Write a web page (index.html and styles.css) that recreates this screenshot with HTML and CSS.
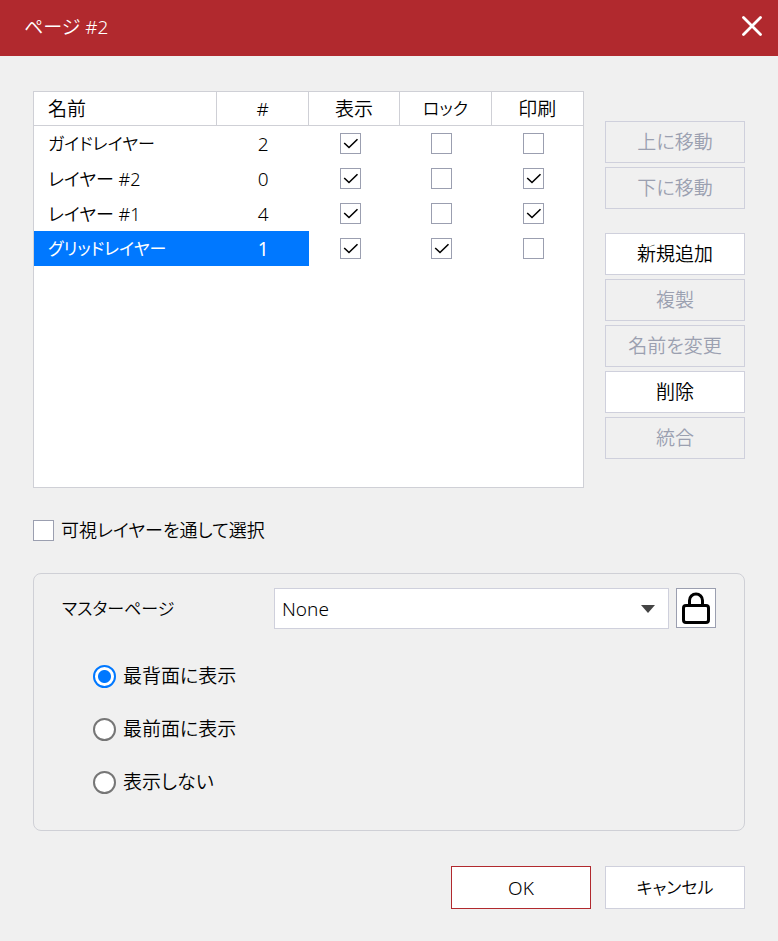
FILE: index.html
```html
<!DOCTYPE html>
<html lang="ja">
<head>
<meta charset="utf-8">
<title>ページ #2</title>
<link rel="stylesheet" href="styles.css">
</head>
<body>
<header class="titlebar">
  <h1 class="title">ページ #2</h1>
  <button class="close" type="button" aria-label="閉じる">
    <svg width="22" height="22" viewBox="0 0 22 22"><path d="M2.500 1.500 19.500 18.500M19.500 1.500 2.500 18.500" fill="none" stroke="#fff" stroke-width="2.800" stroke-linecap="round"/></svg>
  </button>
</header>
<form class="dialog">
  <div class="layers">
    <div class="list">
      <table class="table">
        <thead>
          <tr><th class="name">名前</th><th>#</th><th>表示</th><th class="kana">ロック</th><th>印刷</th></tr>
        </thead>
        <tbody>
          <tr>
            <td class="name kana">ガイドレイヤー</td><td>2</td>
            <td class="tick"><input class="check" type="checkbox" aria-label="表示" checked></td>
            <td class="tick"><input class="check" type="checkbox" aria-label="ロック"></td>
            <td class="tick"><input class="check" type="checkbox" aria-label="印刷"></td>
          </tr>
          <tr>
            <td class="name mixed">レイヤー #2</td><td>0</td>
            <td class="tick"><input class="check" type="checkbox" aria-label="表示" checked></td>
            <td class="tick"><input class="check" type="checkbox" aria-label="ロック"></td>
            <td class="tick"><input class="check" type="checkbox" aria-label="印刷" checked></td>
          </tr>
          <tr>
            <td class="name mixed">レイヤー #1</td><td>4</td>
            <td class="tick"><input class="check" type="checkbox" aria-label="表示" checked></td>
            <td class="tick"><input class="check" type="checkbox" aria-label="ロック"></td>
            <td class="tick"><input class="check" type="checkbox" aria-label="印刷" checked></td>
          </tr>
          <tr>
            <td class="name kana selected">グリッドレイヤー</td><td class="selected">1</td>
            <td class="tick"><input class="check" type="checkbox" aria-label="表示" checked></td>
            <td class="tick"><input class="check" type="checkbox" aria-label="ロック" checked></td>
            <td class="tick"><input class="check" type="checkbox" aria-label="印刷"></td>
          </tr>
        </tbody>
      </table>
    </div>
    <div class="actions">
      <div class="group">
        <button class="button" type="button" disabled>上に移動</button>
        <button class="button" type="button" disabled>下に移動</button>
      </div>
      <div class="group">
        <button class="button" type="button">新規追加</button>
        <button class="button" type="button" disabled>複製</button>
        <button class="button" type="button" disabled>名前を変更</button>
        <button class="button" type="button">削除</button>
        <button class="button" type="button" disabled>統合</button>
      </div>
    </div>
  </div>

  <label class="option mixed"><input class="check" type="checkbox">可視レイヤーを通して選択</label>

  <section class="master">
    <div class="master-row">
      <label class="master-label kana" for="master">マスターページ</label>
      <select class="select" id="master"><option>None</option></select>
      <button class="lock" type="button" aria-label="ロック">
        <svg width="30" height="34" viewBox="0 0 30 34"><path d="M8.500 14V9.500a6.500 6.500 0 0 1 13 0V14" fill="none" stroke="#000" stroke-width="3"/><rect x="2.500" y="14.500" width="25" height="17" rx="2.500" fill="none" stroke="#000" stroke-width="3"/></svg>
      </button>
    </div>
    <div class="radios">
      <label class="option"><input class="radio" type="radio" name="position" checked>最背面に表示</label>
      <label class="option"><input class="radio" type="radio" name="position">最前面に表示</label>
      <label class="option"><input class="radio" type="radio" name="position">表示しない</label>
    </div>
  </section>

  <footer class="footer">
    <button class="button primary" type="button">OK</button>
    <button class="button kana" type="button">キャンセル</button>
  </footer>
</form>
</body>
</html>
```
FILE: styles.css
```css
* {
  box-sizing: border-box;
}

body,
button,
select {
  font-family: "Noto Sans", "Noto Sans CJK JP", sans-serif;
  font-size: 19px;
  font-weight: 350;
  line-height: 28px;
  font-feature-settings: "palt";
  color: #000;
}

.kana {
  font-size: 17px;
}

.mixed {
  font-size: 18px;
}

body {
  margin: 0;
  background: #f0f0f0;
}

.titlebar {
  display: flex;
  align-items: center;
  justify-content: space-between;
  height: 56px;
  padding: 0 15px 2px 24px;
  background: #b1292e;
  color: #fff;
}

.title {
  margin: 0;
  font-size: 19px;
  font-weight: 350;
}

.close {
  display: flex;
  padding: 0;
  border: 0;
  background: none;
}

.dialog {
  padding: 35px 33px 32px;
}

.layers {
  display: flex;
  gap: 21px;
}

.list {
  flex: 1;
  min-height: 397px;
  border: 1px solid #cfd0d6;
  background: #fff;
}

.table {
  width: 100%;
  table-layout: fixed;
  border-collapse: separate;
  border-spacing: 0;
}

.table th,
.table td {
  height: 35px;
  padding: 0;
  font-weight: inherit;
  text-align: center;
}

.table th {
  height: 34px;
  border-right: 1px solid #cfd0d6;
  border-bottom: 1px solid #cfd0d6;
}

.table th:last-child {
  border-right: 0;
}

.table .name {
  width: 33.4%;
  padding-left: 14px;
  text-align: left;
}

.table .tick {
  padding-right: 8px;
}

.table .selected {
  background: #0078ff;
  color: #fff;
  font-weight: 400;
}

.check {
  display: block;
  flex: none;
  appearance: none;
  width: 21px;
  height: 21px;
  margin: 0;
  border: 1px solid #9b9fb0;
  background: #fff;
}

.table .check {
  margin: 0 auto;
}

.check:checked {
  background: #fff url("data:image/svg+xml,%3Csvg xmlns='http://www.w3.org/2000/svg' viewBox='0 0 19 19'%3E%3Cpath d='M3.200 9 8 13.500 16.500 5.200' fill='none' stroke='%23000' stroke-width='1.600'/%3E%3C/svg%3E") center / 19px no-repeat;
}

.actions {
  display: flex;
  flex-direction: column;
  gap: 24px;
  padding-top: 30px;
}

.group {
  display: flex;
  flex-direction: column;
  gap: 4px;
}

.button {
  width: 140px;
  height: 42px;
  padding: 0;
  border: 1px solid #cfd0dc;
  background: #fff;
}

.button:disabled {
  background: #f0f0f0;
  color: #9ba0b0;
}

.option {
  display: flex;
  align-items: center;
  gap: 7px;
}

.dialog > .option {
  margin: 28px 0 29px;
}

.master {
  padding: 14px 28px 34px;
  border: 1px solid #cfd0d6;
  border-radius: 8px;
}

.master-row {
  display: flex;
  align-items: center;
  gap: 7px;
}

.master-label {
  width: 205px;
}

.select {
  flex: 1;
  height: 41px;
  padding: 0 7px;
  border: 1px solid #cfd0dc;
  border-radius: 0;
  appearance: none;
  background: #fff url("data:image/svg+xml,%3Csvg xmlns='http://www.w3.org/2000/svg' width='14' height='8'%3E%3Cpath d='M0 0H14L7 8Z' fill='%23444'/%3E%3C/svg%3E") right 13px center no-repeat;
}

.lock {
  display: flex;
  align-items: center;
  align-self: flex-start;
  justify-content: center;
  width: 40px;
  height: 40px;
  padding: 0;
  border: 1px solid #9b9fb0;
  background: #fff;
}

.radios {
  display: flex;
  flex-direction: column;
  gap: 25px;
  padding: 33px 0 0 31px;
}

.radio {
  appearance: none;
  width: 23px;
  height: 23px;
  margin: 0;
  border: 2px solid #767676;
  border-radius: 50%;
  background: #fff;
}

.radio:checked {
  border-color: #0078ff;
  background: radial-gradient(circle, #0078ff 6px, #fff 7px);
}

.footer {
  display: flex;
  justify-content: flex-end;
  gap: 14px;
  padding-top: 35px;
}

.footer .button {
  height: 43px;
}

.primary {
  border-color: #b1292e;
}
```
